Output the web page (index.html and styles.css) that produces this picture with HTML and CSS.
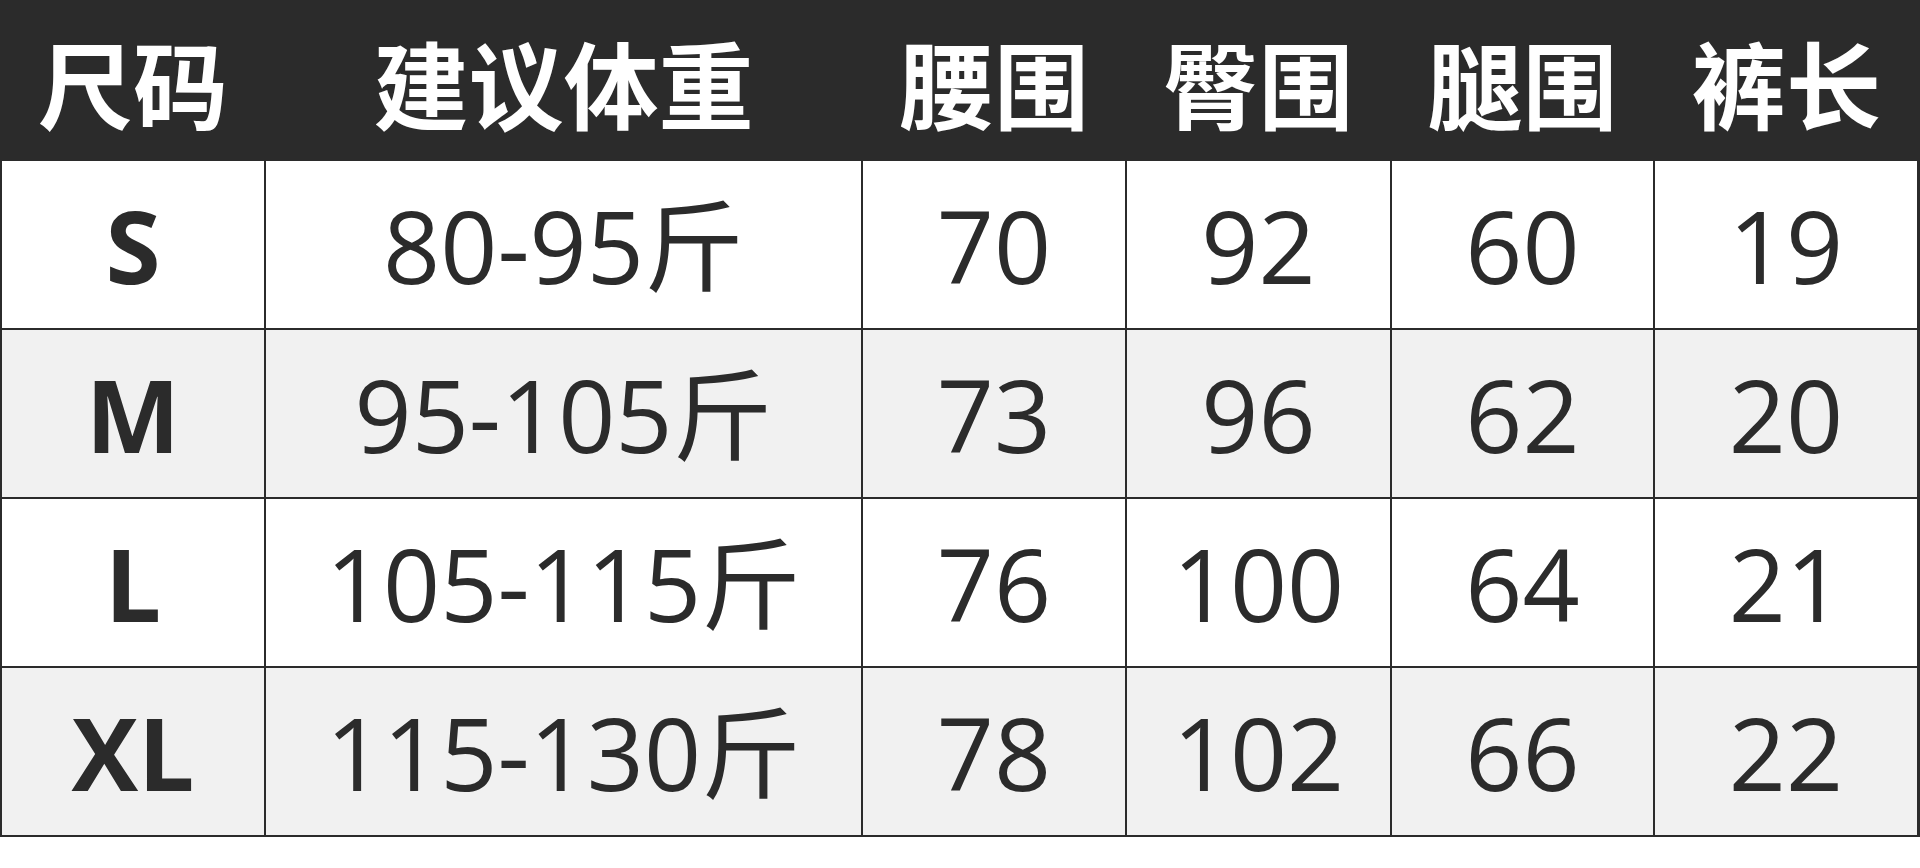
FILE: index.html
```html
<!DOCTYPE html>
<html lang="zh-CN">
<head>
<meta charset="utf-8">
<title>尺码表</title>
<link rel="stylesheet" href="styles.css">
</head>
<body>
<div class="size-table">
  <div class="hd">尺码</div>
  <div class="hd">建议体重</div>
  <div class="hd">腰围</div>
  <div class="hd">臀围</div>
  <div class="hd">腿围</div>
  <div class="hd">裤长</div>

  <div class="cell size">S</div>
  <div class="cell">80-95斤</div>
  <div class="cell">70</div>
  <div class="cell">92</div>
  <div class="cell">60</div>
  <div class="cell">19</div>

  <div class="cell size alt">M</div>
  <div class="cell alt">95-105斤</div>
  <div class="cell alt">73</div>
  <div class="cell alt">96</div>
  <div class="cell alt">62</div>
  <div class="cell alt">20</div>

  <div class="cell size">L</div>
  <div class="cell">105-115斤</div>
  <div class="cell">76</div>
  <div class="cell">100</div>
  <div class="cell">64</div>
  <div class="cell">21</div>

  <div class="cell size alt">XL</div>
  <div class="cell alt">115-130斤</div>
  <div class="cell alt">78</div>
  <div class="cell alt">102</div>
  <div class="cell alt">66</div>
  <div class="cell alt">22</div>
</div>
</body>
</html>
```

FILE: styles.css
```css
html, body {
  margin: 0;
  padding: 0;
  background: #ffffff;
}

.size-table {
  display: grid;
  grid-template-columns: 262px 595px 262px 263px 261px 262px;
  grid-template-rows: 159px repeat(4, 167px);
  gap: 2px;
  padding: 0 3px 2px 2px;
  background: #2b2b2b;
  width: 1920px;
  box-sizing: border-box;
}

.hd {
  display: flex;
  align-items: center;
  justify-content: center;
  padding-top: 4px;
  box-sizing: border-box;
  color: #ffffff;
  font-family: "Noto Sans CJK SC", "Noto Sans", sans-serif;
  font-weight: 700;
  font-size: 95px;
  line-height: 1;
  white-space: nowrap;
}

.cell {
  display: flex;
  align-items: center;
  justify-content: center;
  background: #ffffff;
  color: #2b2b2b;
  font-family: "Open Sans", "Noto Sans CJK SC", sans-serif;
  font-weight: 400;
  font-size: 100px;
  line-height: 1;
  white-space: nowrap;
}

.cell.alt {
  background: #f1f1f1;
}

.cell.size {
  font-weight: 700;
}
```
